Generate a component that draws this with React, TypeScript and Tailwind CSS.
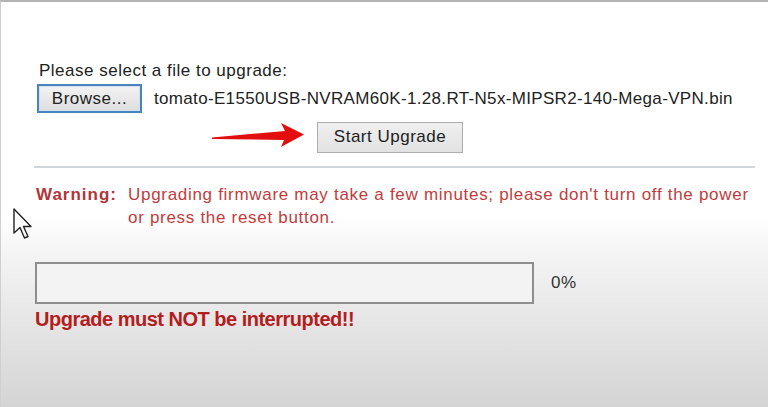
export default function App() {
  return (
    <div
      className="relative h-[407px] w-[768px] overflow-hidden border-t-2 border-l border-t-[#b4b4b4] border-l-[#cfcfcf] bg-[linear-gradient(to_bottom,#ffffff_0px,#ffffff_215px,#f2f2f2_260px,#d4d4d4_405px)] text-[#222] font-['Liberation_Sans',Arial,sans-serif]"
    >
      <div className="pl-[38px] pt-[59px] text-[17px] leading-[20px] tracking-[0.5px]">
        Please select a file to upgrade:
      </div>

      <div className="mt-[3px] flex items-center pl-[36px]">
        <button className="h-[29px] w-[105px] border-2 border-[#4a83bd] bg-[linear-gradient(to_bottom,#f3f3f3,#dedede)] text-[17px] leading-[20px] tracking-[0.5px] text-[#222] shadow-[inset_0_0_0_1px_#cfe0f1]">
          Browse...
        </button>
        <span className="ml-[12px] text-[17px] leading-[20px] tracking-[0.33px]">
          tomato-E1550USB-NVRAM60K-1.28.RT-N5x-MIPSR2-140-Mega-VPN.bin
        </span>
      </div>

      <div className="mt-[8px] flex items-center pl-[208px]">
        <RedArrow />
        <button className="ml-[12px] h-[31px] w-[146px] border border-[#adadad] bg-[linear-gradient(to_bottom,#efefef,#e2e2e2)] text-[17px] leading-[20px] tracking-[0.5px] text-[#222]">
          Start Upgrade
        </button>
      </div>

      <div className="ml-[33px] mr-[13px] mt-[13px] h-[2px] bg-[#d0d6dc]" />

      <div className="mt-[15px] flex pl-[35px] text-[17px] leading-[23px]">
        <div className="w-[92px] font-bold tracking-[1px] text-[#b23636]">Warning:</div>
        <div className="w-[636px] text-[#c23c3c] tracking-[0.7px]">
          Upgrading firmware may take a few minutes; please don&apos;t turn off the power
          <br />
          or press the reset button.
        </div>
      </div>

      <div className="mt-[33px] flex items-center pl-[34px]">
        <div className="h-[42px] w-[499px] border-2 border-[#8e8e8e] bg-[#f3f3f3]" />
        <span className="ml-[17px] text-[17px] tracking-[0.5px] text-[#333]">0%</span>
      </div>

      <div className="mt-[4px] pl-[34px] text-[20px] leading-[22px] font-bold tracking-[-0.5px] text-[#b31d1d]">
        Upgrade must NOT be interrupted!!
      </div>

      <Cursor />
    </div>
  );
}

function RedArrow() {
  return (
    <svg width="96" height="32" viewBox="0 0 96 32">
      <polygon points="3,16.5 76,10 72,2 95,13.5 72,26 75,19 3,18" fill="#e30e0e" />
    </svg>
  );
}

function Cursor() {
  return (
    <svg className="absolute left-[11px] top-[205px]" width="22" height="34" viewBox="0 0 22 34">
      <path
        d="M2 2 L2 26 L8 20.5 L12.5 31 L16 29.5 L11.5 19.5 L19 19.5 Z"
        fill="#fff"
        stroke="#222"
        strokeWidth="1.4"
        strokeLinejoin="round"
      />
    </svg>
  );
}
